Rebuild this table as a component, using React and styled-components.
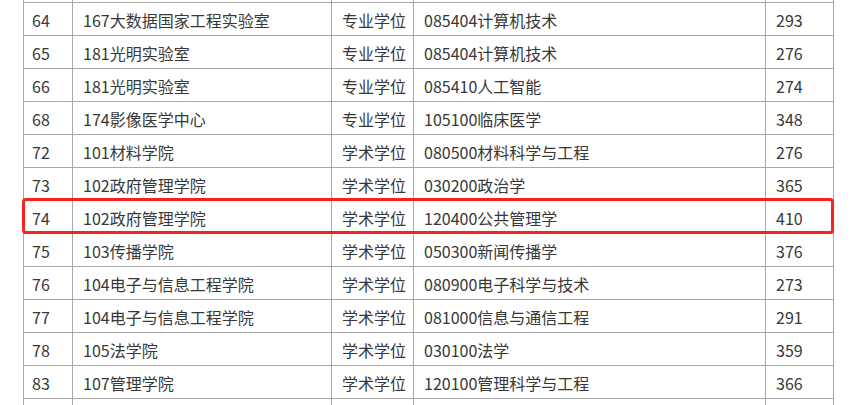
import React from "react";
import styled, { createGlobalStyle } from "styled-components";

const GlobalStyle = createGlobalStyle`
  html, body {
    margin: 0;
    padding: 0;
    background: #ffffff;
    overflow: hidden;
  }
  body {
    font-family: "Noto Sans CJK SC", "Noto Sans", sans-serif;
  }
`;

const Page = styled.div`
  width: 861px;
  height: 405px;
  overflow: hidden;
  padding-left: 23px;
  box-sizing: border-box;
`;

const TableWrap = styled.div`
  position: relative;
  width: 810px;
  margin-top: -31px;
`;

const Table = styled.table`
  width: 810px;
  border-collapse: collapse;
  table-layout: fixed;
  font-size: 16px;
  color: #383838;
`;

const Cell = styled.td`
  height: 33px;
  padding: 2px 0 0 ${(p) => (p.$first ? 8 : 10)}px;
  border: 1px solid #a8a8a8;
  box-sizing: border-box;
  white-space: nowrap;
  line-height: 20px;
  vertical-align: middle;
`;

const Highlight = styled.div`
  position: absolute;
  left: -1px;
  top: ${(p) => p.$top}px;
  width: 812px;
  height: 36px;
  border: 3px solid #f52222;
  border-radius: 4px;
  box-sizing: border-box;
  pointer-events: none;
`;

const rows = [
  ["", "", "", "", ""],
  ["64", "167大数据国家工程实验室", "专业学位", "085404计算机技术", "293"],
  ["65", "181光明实验室", "专业学位", "085404计算机技术", "276"],
  ["66", "181光明实验室", "专业学位", "085410人工智能", "274"],
  ["68", "174影像医学中心", "专业学位", "105100临床医学", "348"],
  ["72", "101材料学院", "学术学位", "080500材料科学与工程", "276"],
  ["73", "102政府管理学院", "学术学位", "030200政治学", "365"],
  ["74", "102政府管理学院", "学术学位", "120400公共管理学", "410"],
  ["75", "103传播学院", "学术学位", "050300新闻传播学", "376"],
  ["76", "104电子与信息工程学院", "学术学位", "080900电子科学与技术", "273"],
  ["77", "104电子与信息工程学院", "学术学位", "081000信息与通信工程", "291"],
  ["78", "105法学院", "学术学位", "030100法学", "359"],
  ["83", "107管理学院", "学术学位", "120100管理科学与工程", "366"],
  ["", "", "", "", ""],
];

const widths = [49, 259, 82, 352, 68];
const ROW = 33;
const marked = 7;

export default function App() {
  return (
    <Page>
      <GlobalStyle />
      <TableWrap>
        <Table>
          <colgroup>
            {widths.map((w, i) => (
              <col key={i} style={{ width: w }} />
            ))}
          </colgroup>
          <tbody>
            {rows.map((r, i) => (
              <tr key={i}>
                {r.map((c, j) => (
                  <Cell key={j} $first={j === 0}>
                    {c}
                  </Cell>
                ))}
              </tr>
            ))}
          </tbody>
        </Table>
        <Highlight $top={marked * ROW - 2} />
      </TableWrap>
    </Page>
  );
}
